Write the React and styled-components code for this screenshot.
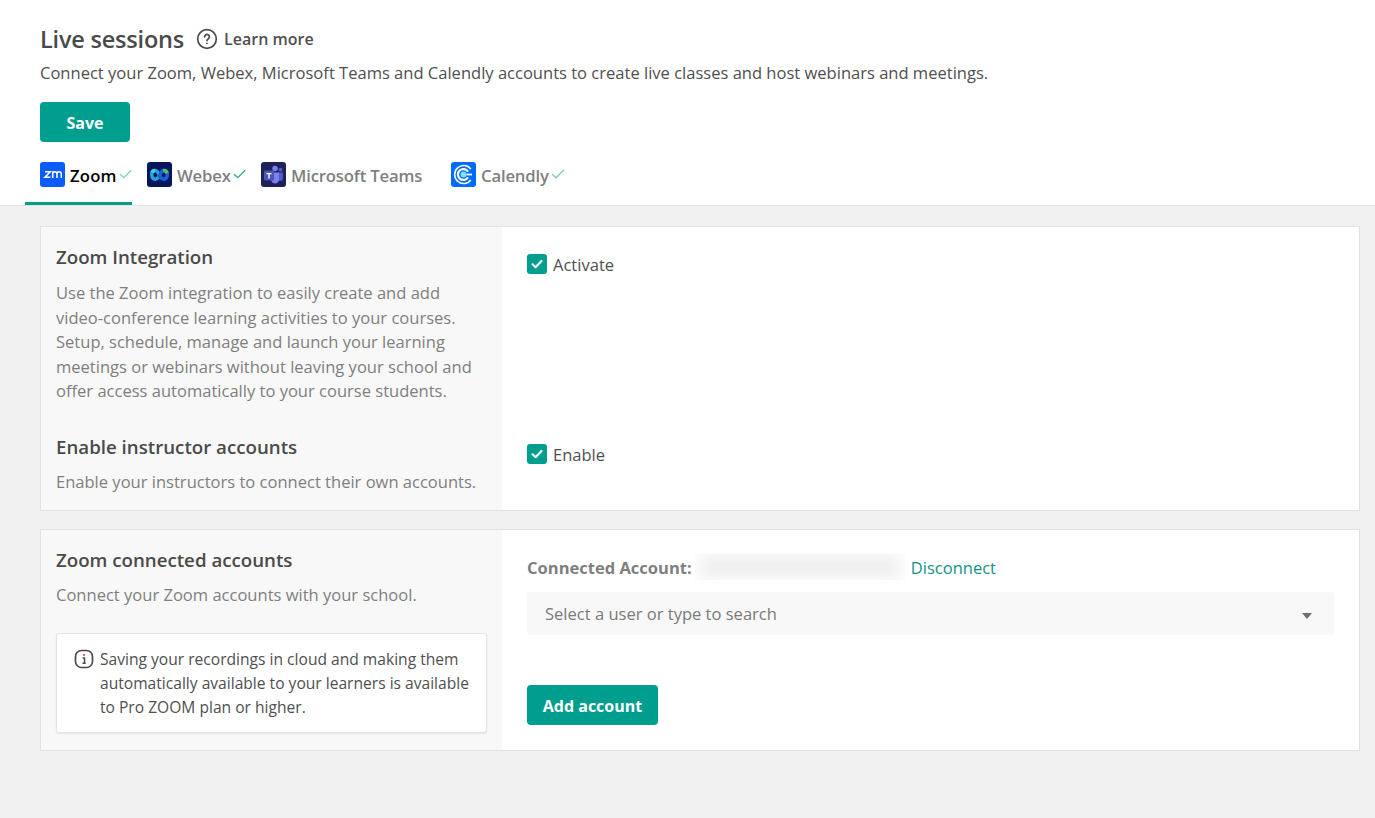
import React from 'react';
import styled, { createGlobalStyle } from 'styled-components';

const GlobalStyle = createGlobalStyle`
  html, body {
    margin: 0;
    padding: 0;
    background: #f1f1f1;
  }
  body {
    font-family: "Open Sans", "Noto Sans", sans-serif;
    color: #555;
  }
`;

const Page = styled.div`
  min-height: 818px;
  background: #f1f1f1;
`;

const Header = styled.header`
  box-sizing: content-box;
  height: 182px;
  padding: 23px 40px 0;
  background: #fff;
  border-bottom: 1px solid #e3e3e3;
  display: flex;
  flex-direction: column;
`;

const TitleRow = styled.div`
  display: flex;
  align-items: center;
  height: 32px;
`;

const Title = styled.h1`
  margin: 0;
  font-size: 23.5px;
  font-weight: 600;
  color: #4a4a4a;
  letter-spacing: -0.2px;
`;

const LearnMore = styled.a`
  display: flex;
  align-items: center;
  margin-left: 12px;
  gap: 6px;
  font-size: 16px;
  font-weight: 600;
  color: #4f4f4f;
`;

const Intro = styled.p`
  margin: 7px 0 0;
  font-size: 16.55px;
  line-height: 22px;
  color: #4f4f4f;
`;

const Button = styled.button`
  display: block;
  height: 40px;
  width: ${p => p.$width}px;
  padding: 2px 0 0;
  border: none;
  border-radius: 4px;
  background: #009e8e;
  color: #fff;
  font-family: inherit;
  font-size: 16px;
  font-weight: 700;
`;

const SaveWrap = styled.div`
  margin-top: 18px;
`;

const Tabs = styled.nav`
  display: flex;
  margin: 20px 0 0 -15px;
  height: 43px;
`;

const Tab = styled.div`
  display: flex;
  align-items: flex-start;
  box-sizing: border-box;
  height: 43px;
  padding-left: ${p => p.$pl}px;
  width: ${p => p.$width}px;
  border-bottom: 3px solid ${p => (p.$active ? '#009e8e' : 'transparent')};
`;

const TabLabel = styled.span`
  margin-left: 5px;
  padding-top: 1px;
  font-size: 16.7px;
  line-height: 26px;
  font-weight: 600;
  letter-spacing: ${p => (p.$active ? '0.2px' : '-0.17px')};
  color: ${p => (p.$active ? '#000' : '#7f7f7f')};
`;

const TabCheck = styled.svg`
  width: 14px;
  height: 14px;
  margin-top: 5px;
  margin-left: 2px;
  fill: none;
  stroke: ${p => (p.$active ? '#7fcdc5' : '#2fae9f')};
  stroke-width: 1.4;
`;

const Content = styled.main`
  padding: 20px 15px 67px 40px;
  display: flex;
  flex-direction: column;
  gap: 18px;
`;

const Card = styled.section`
  display: grid;
  grid-template-columns: 461px 1fr;
  height: ${p => p.$height}px;
  box-sizing: border-box;
  background: #fff;
  border: 1px solid #e2e2e2;
`;

const Side = styled.div`
  background: #f8f8f8;
  padding: 15px 15px 0;
`;

const Heading = styled.h2`
  margin: ${p => p.$top || 0}px 0 0;
  font-size: 18.7px;
  line-height: 30px;
  font-weight: 600;
  color: #4a4a4a;
`;

const Help = styled.p`
  margin: ${p => p.$top || 8}px 0 0;
  font-size: 16.55px;
  line-height: 24.5px;
  color: #7f7f7f;
`;

const Body = styled.div`
  padding: ${p => p.$top}px 25px 0;
  display: flex;
  flex-direction: column;
`;

const CheckRow = styled.label`
  display: flex;
  align-items: center;
  gap: 6px;
  height: 26px;
  font-size: 16.55px;
  color: #4f4f4f;
  margin-top: ${p => p.$top || 0}px;
`;

const Box = styled.span`
  width: 20px;
  height: 20px;
  border-radius: 3px;
  background: #009e8e;
  display: flex;
  align-items: center;
  justify-content: center;
`;

const Notice = styled.div`
  display: flex;
  gap: 6px;
  box-sizing: border-box;
  width: 431px;
  height: 100px;
  margin-top: 25px;
  padding: 13px 14px 0 17px;
  background: #fff;
  border: 1px solid #e4e4e4;
  border-radius: 3px;
  box-shadow: 0 1px 2px rgba(0, 0, 0, 0.08);
  font-size: 15.6px;
  line-height: 24.4px;
  color: #4f4f4f;
`;

const NoticeIcon = styled.svg`
  flex: none;
  width: 20px;
  height: 20px;
  margin-top: 2px;
`;

const AccountRow = styled.div`
  display: flex;
  align-items: center;
  height: 26px;
  font-size: 16.55px;
`;

const AccountLabel = styled.strong`
  font-weight: 700;
  color: #7f7f7f;
`;

const Redacted = styled.span`
  position: relative;
  overflow: hidden;
  display: block;
  width: 210px;
  height: 26px;
  margin-left: 3px;
  background: #fcfcfc;

  &::after {
    content: "";
    position: absolute;
    inset: 5px 8px;
    background: #ececec;
    filter: blur(7px);
  }
`;

const Disconnect = styled.a`
  margin-left: 6px;
  color: #149384;
`;

const SelectBox = styled.div`
  display: flex;
  align-items: center;
  justify-content: space-between;
  height: 43px;
  margin-top: 12px;
  padding: 0 22px 0 18px;
  border-radius: 4px;
  background: #f8f8f8;
  font-size: 16.55px;
  color: #7a7a7a;
`;

const Caret = styled.span`
  width: 0;
  height: 0;
  margin-top: 4px;
  border-left: 5px solid transparent;
  border-right: 5px solid transparent;
  border-top: 6px solid #6f6f6f;
`;

const AddWrap = styled.div`
  margin-top: 50px;
`;

const Logo = styled.svg`
  flex: none;
  width: 25px;
  height: 25px;
  display: block;
`;

const CheckMark = () => (
  <svg width="14" height="14" viewBox="0 0 14 14" fill="none" stroke="#fff" strokeWidth="2.2" strokeLinecap="round" strokeLinejoin="round">
    <path d="M2.5 7.3 5.6 10.2 11.5 4" />
  </svg>
);

const TickIcon = ({ active }) => (
  <TabCheck $active={active} viewBox="0 0 14 14">
    <path d="M1.2 7.2 5 10.8 12.8 3" />
  </TabCheck>
);

const ZoomLogo = () => (
  <Logo viewBox="0 0 25 25">
    <rect width="25" height="25" rx="3" fill="#0b5cff" />
    <path d="M5 9.700h5.200L5 15.300h5.400" fill="none" stroke="#fff" strokeWidth="1.600" />
    <path d="M12.700 16V9.200M12.700 12c0-3 4.300-3 4.300 0v4M17 12c0-3 4.300-3 4.300 0v4" fill="none" stroke="#fff" strokeWidth="1.500" />
  </Logo>
);

const WebexLogo = () => (
  <Logo viewBox="0 0 25 25">
    <rect width="25" height="25" rx="3" fill="#07155c" />
    <path d="M12.500 14c-1-3-2-5.500-4.500-5.500-2.300 0-3.300 2-3.300 4 0 2.700 1.500 4.800 3.500 4.800 2.200 0 3.300-2 4.300-3.300z" fill="none" stroke="#1fa8e0" strokeWidth="3.500" />
    <path d="M12.500 14c1-3 2-5.500 4.500-5.500 2.300 0 3.300 2 3.300 4 0 2.700-1.500 4.800-3.500 4.800-2.200 0-3.300-2-4.300-3.300z" fill="none" stroke="#1565d8" strokeWidth="3.500" />
    <path d="M5 10.500c.6-1.300 1.600-2 3-2" fill="none" stroke="#3fd0d8" strokeWidth="3.500" />
    <path d="M16 8.600c1.800-.4 3.500.5 4.200 2.600" fill="none" stroke="#45c468" strokeWidth="3.500" />
  </Logo>
);

const TeamsLogo = () => (
  <Logo viewBox="0 0 25 25">
    <rect width="25" height="25" rx="3" fill="#1d2158" />
    <circle cx="14" cy="6.500" r="2.700" fill="#7b83eb" />
    <circle cx="19.500" cy="7.800" r="2" fill="#5059c9" />
    <path d="M17 10.500h5v5.500c0 1.800-1.200 3-2.800 3-.8 0-1.600-.3-2.200-.8z" fill="#5059c9" />
    <path d="M10 10.500h8v7c0 2.400-1.800 4-4 4s-4-1.800-4-4z" fill="#7b83eb" />
    <rect x="3" y="8.500" width="10" height="10" rx="1" fill="#4b53bc" />
    <path d="M5.500 11h5v1.200H8.700v4.300H7.300v-4.300H5.500z" fill="#fff" />
  </Logo>
);

const CalendlyLogo = () => (
  <Logo viewBox="0 0 25 25">
    <rect width="25" height="25" rx="3" fill="#006bff" />
    <path d="M19.800 7a9 9 0 1 0 0 11" fill="none" stroke="#fff" strokeWidth="1.500" />
    <path d="M17 9.800a5.400 5.400 0 1 0 0 5.400" fill="none" stroke="#fff" strokeWidth="2.200" />
    <circle cx="12.500" cy="12.500" r="3" fill="#7fe3f5" />
    <path d="M15.500 12.500h5.500" stroke="#fff" strokeWidth="1.800" />
  </Logo>
);

const App = () => (
  <Page>
    <GlobalStyle />
    <Header>
      <TitleRow>
        <Title>Live sessions</Title>
        <LearnMore>
          <svg width="22" height="22" viewBox="0 0 22 22" fill="none" stroke="#4a4a4a">
            <circle cx="11" cy="11" r="9.300" strokeWidth="1.700" />
            <path d="M8.600 8.800a2.400 2.400 0 1 1 3.600 2.100c-.8.500-1.200.9-1.200 1.700" strokeWidth="1.700" strokeLinecap="round" />
            <circle cx="11" cy="15.300" r="0.500" strokeWidth="1" />
          </svg>
          Learn more
        </LearnMore>
      </TitleRow>
      <Intro>Connect your Zoom, Webex, Microsoft Teams and Calendly accounts to create live classes and host webinars and meetings.</Intro>
      <SaveWrap>
        <Button $width={90}>Save</Button>
      </SaveWrap>
      <Tabs>
        <Tab $active $pl={15} $width={107}>
          <ZoomLogo />
          <TabLabel $active>Zoom</TabLabel>
          <TickIcon active />
        </Tab>
        <Tab $pl={15} $width={114}>
          <WebexLogo />
          <TabLabel>Webex</TabLabel>
          <TickIcon />
        </Tab>
        <Tab $pl={15} $width={205}>
          <TeamsLogo />
          <TabLabel>Microsoft Teams</TabLabel>
        </Tab>
        <Tab $pl={0} $width={130}>
          <CalendlyLogo />
          <TabLabel>Calendly</TabLabel>
          <TickIcon active />
        </Tab>
      </Tabs>
    </Header>
    <Content>
      <Card $height={285}>
        <Side>
          <Heading>Zoom Integration</Heading>
          <Help $top={9}>Use the Zoom integration to easily create and add video-conference learning activities to your courses. Setup, schedule, manage and launch your learning meetings or webinars without leaving your school and offer access automatically to your course students.</Help>
          <Heading $top={28}>Enable instructor accounts</Heading>
          <Help>Enable your instructors to connect their own accounts.</Help>
        </Side>
        <Body $top={24}>
          <CheckRow>
            <Box><CheckMark /></Box>
            Activate
          </CheckRow>
          <CheckRow $top={164}>
            <Box><CheckMark /></Box>
            Enable
          </CheckRow>
        </Body>
      </Card>
      <Card $height={222}>
        <Side>
          <Heading>Zoom connected accounts</Heading>
          <Help>Connect your Zoom accounts with your school.</Help>
          <Notice>
            <NoticeIcon viewBox="0 0 20 20" fill="none">
              <rect x="1.500" y="1.500" width="17" height="17" rx="6" stroke="#4a4a4a" strokeWidth="1.700" />
              <circle cx="10" cy="6" r="1" fill="#c0392b" />
              <path d="M8.500 9h2v5M8.500 14.300h3.200" stroke="#4a4a4a" strokeWidth="1.500" />
            </NoticeIcon>
            <span>Saving your recordings in cloud and making them automatically available to your learners is available to Pro ZOOM plan or higher.</span>
          </Notice>
        </Side>
        <Body $top={24}>
          <AccountRow>
            <AccountLabel>Connected Account:</AccountLabel>
            <Redacted />
            <Disconnect>Disconnect</Disconnect>
          </AccountRow>
          <SelectBox>
            Select a user or type to search
            <Caret />
          </SelectBox>
          <AddWrap>
            <Button $width={131}>Add account</Button>
          </AddWrap>
        </Body>
      </Card>
    </Content>
  </Page>
);

export default App;
